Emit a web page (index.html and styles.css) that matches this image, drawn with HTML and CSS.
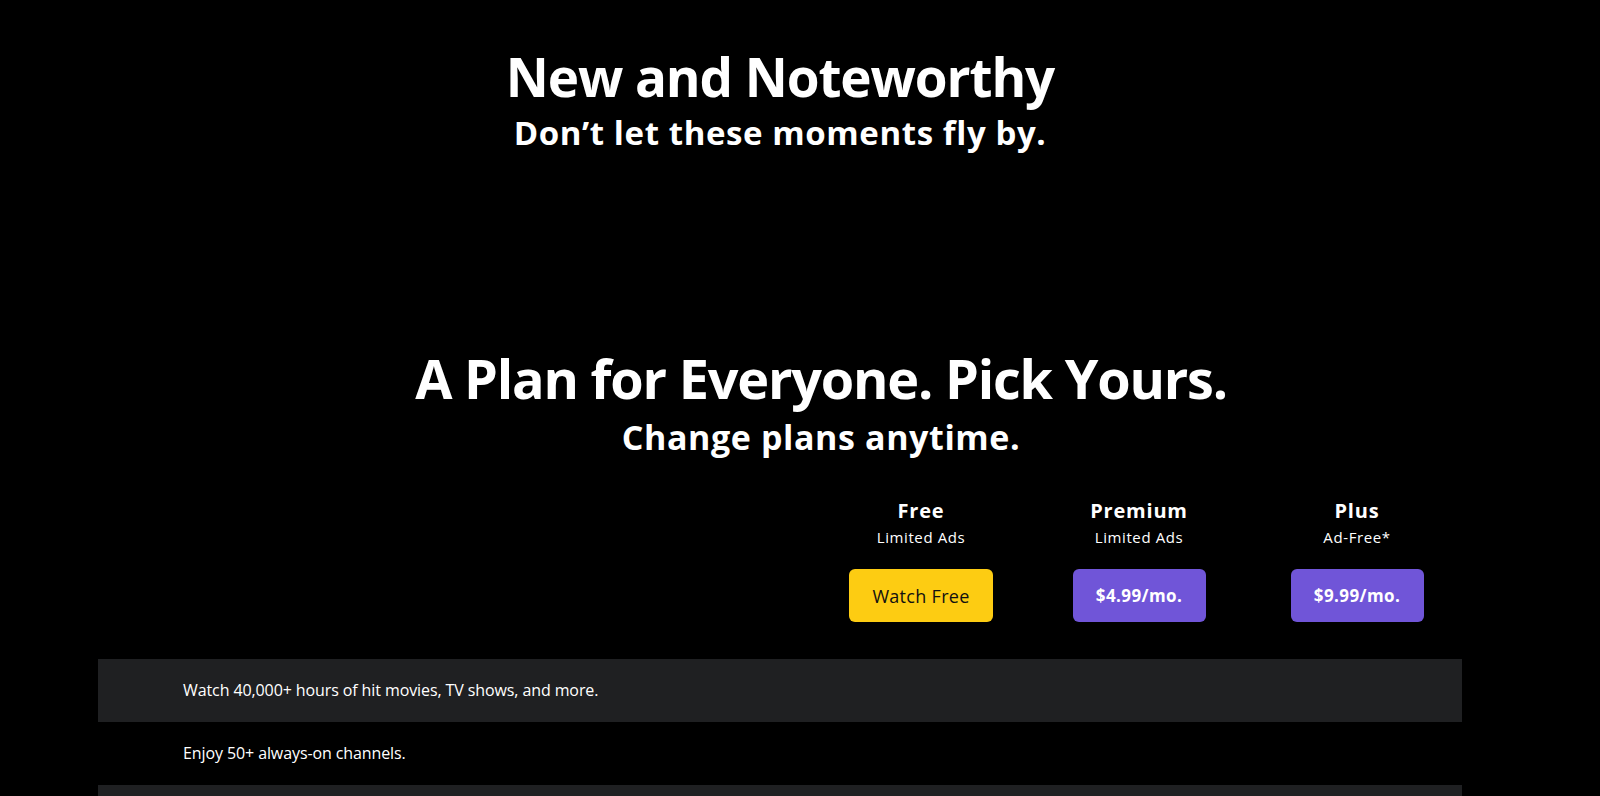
FILE: index.html
```html
<!DOCTYPE html>
<html lang="en">
<head>
<meta charset="utf-8">
<title>Plans</title>
<link rel="stylesheet" href="styles.css">
</head>
<body>
<div class="page">
  <section class="hero">
    <h1 class="hero-title">New and Noteworthy</h1>
    <p class="hero-sub">Don’t let these moments fly by.</p>
  </section>

  <section class="plans">
    <div class="plans-head">
      <h2 class="plans-title">A Plan for Everyone. Pick Yours.</h2>
      <p class="plans-sub">Change plans anytime.</p>
    </div>

    <div class="plan-grid">
      <div class="plan-spacer"></div>
      <div class="plan">
        <div class="plan-name">Free</div>
        <div class="plan-note">Limited Ads</div>
        <a class="btn btn-free">Watch Free</a>
      </div>
      <div class="plan">
        <div class="plan-name">Premium</div>
        <div class="plan-note">Limited Ads</div>
        <a class="btn btn-paid">$4.99/mo.</a>
      </div>
      <div class="plan">
        <div class="plan-name">Plus</div>
        <div class="plan-note">Ad-Free*</div>
        <a class="btn btn-paid">$9.99/mo.</a>
      </div>
    </div>

    <div class="features">
      <div class="feature shaded">Watch 40,000+ hours of hit movies, TV shows, and more.</div>
      <div class="feature">Enjoy 50+ always-on channels.</div>
      <div class="feature shaded"></div>
    </div>
  </section>
</div>
</body>
</html>
```

FILE: styles.css
```css
html, body {
  margin: 0;
  padding: 0;
  background: #000;
  color: #fff;
  font-family: "Open Sans", "Liberation Sans", sans-serif;
}

.page {
  width: 1560px;
  overflow: hidden;
}

.hero {
  padding-top: 45px;
  text-align: center;
}

.hero-title {
  margin: 0;
  font-size: 53px;
  line-height: 64px;
  font-weight: 700;
  letter-spacing: -1.1px;
}

.hero-sub {
  margin: 5px 0 0;
  font-size: 33px;
  line-height: 38px;
  font-weight: 700;
  letter-spacing: 0.6px;
}

.plans {
  padding-top: 195px;
}

.plans-head {
  padding-left: 82px;
  text-align: center;
}

.plans-title {
  margin: 0;
  font-size: 54px;
  line-height: 62px;
  font-weight: 700;
  letter-spacing: -1.2px;
}

.plans-sub {
  margin: 8px 0 0;
  font-size: 34px;
  line-height: 41px;
  font-weight: 700;
  letter-spacing: 0.6px;
}

.plan-grid {
  display: grid;
  grid-template-columns: 1fr 218px 218px 218px;
  margin: 41px 94px 0 98px;
}

.plan {
  display: flex;
  flex-direction: column;
  align-items: center;
}

.plan-name {
  font-size: 20px;
  line-height: 24px;
  font-weight: 700;
  letter-spacing: 0.8px;
}

.plan-note {
  margin-top: 5px;
  font-size: 15px;
  line-height: 18px;
  font-weight: 500;
  letter-spacing: 0.6px;
}

.btn {
  margin-top: 23px;
  height: 53px;
  display: flex;
  align-items: center;
  justify-content: center;
  border-radius: 6px;
  box-sizing: border-box;
}

.btn-free {
  width: 144px;
  background: #fdcc12;
  color: #111;
  font-size: 18px;
  font-weight: 500;
  letter-spacing: 0.3px;
}

.btn-paid {
  width: 133px;
  background: #7055d8;
  color: #fff;
  font-size: 17px;
  font-weight: 700;
  letter-spacing: 0.4px;
}

.features {
  margin: 37px 98px 0;
}

.feature {
  height: 63px;
  display: flex;
  align-items: center;
  padding-left: 85px;
  font-size: 16px;
  line-height: 19px;
  font-weight: 500;
  letter-spacing: -0.1px;
}

.shaded {
  background: #1f2022;
}
```
